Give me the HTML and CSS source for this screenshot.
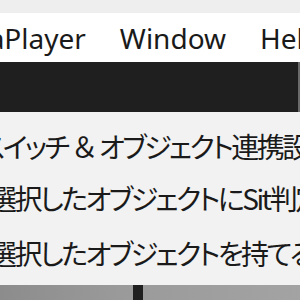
FILE: index.html
```html
<!DOCTYPE html>
<html lang="ja">
<head>
<meta charset="utf-8">
<link rel="stylesheet" href="styles.css">
</head>
<body>
<div class="screen">
  <div class="topstrip"></div>
  <nav class="menubar">
    <span class="menu-item first">MediaPlayer</span>
    <span class="menu-item">Window</span>
    <span class="menu-item">Help</span>
  </nav>
  <div class="toolbar"></div>
  <ul class="dropdown">
    <li class="row r1">スイッチ<span class="amp">＆</span>オブジェクト連携設定</li>
    <li class="row r2">選択したオブジェクトにSit判定</li>
    <li class="row r3">選択したオブジェクトを持てる</li>
  </ul>
  <div class="scene"><span class="post"></span></div>
</div>
</body>
</html>
```
FILE: styles.css
```css
html, body {
  margin: 0;
  padding: 0;
  background: #f0f0f0;
}
.screen {
  width: 300px;
  height: 300px;
  overflow: hidden;
  display: flex;
  flex-direction: column;
}
.topstrip {
  height: 13px;
  background: #eeeeee;
  flex: none;
}
.menubar {
  height: 49px;
  flex: none;
  background: #ffffff;
  display: flex;
  align-items: center;
  white-space: nowrap;
  font-family: "Noto Sans", "Open Sans", sans-serif;
  font-size: 28px;
  color: #1a1a1a;
}
.menu-item {
  margin-right: 34px;
  line-height: 1;
}
.menu-item.first {
  margin-left: -77px;
}
.toolbar {
  height: 50px;
  flex: none;
  background: #1f1f1f;
  border-right: 2px solid #6a6a6a;
}
.dropdown {
  list-style: none;
  margin: 0;
  padding: 8px 0 9px 0;
  background: #f2f2f2;
  height: 156px;
  flex: none;
  font-family: "Noto Sans CJK JP", "Noto Sans", sans-serif;
  font-feature-settings: "palt";
  font-size: 28px;
  letter-spacing: -2.5px;
  color: #1a1a1a;
  white-space: nowrap;
}
.amp {
  font-feature-settings: normal;
  padding: 0 3px;
}
.row {
  height: 52px;
  line-height: 52px;
}
.r1 { margin-left: -20px; }
.r2, .r3 { margin-left: -11px; }
.r3 { padding-top: 3px; }
.scene {
  flex: 1;
  background: linear-gradient(90deg, #8c8c8c 0%, #9a9a9a 40%, #a3a3a3 100%);
  display: flex;
  padding-left: 133px;
}
.post {
  width: 10px;
  background: #202020;
}
```
